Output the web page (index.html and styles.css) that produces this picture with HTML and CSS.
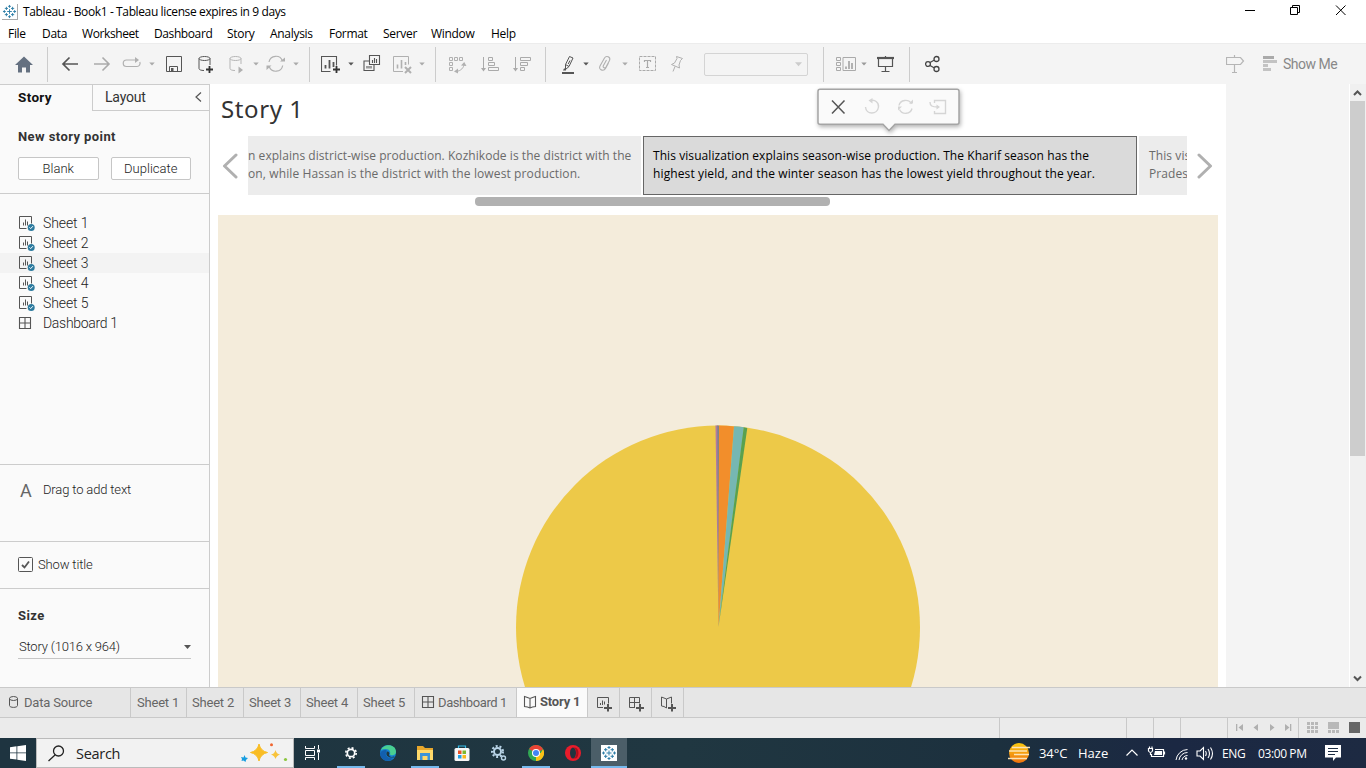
FILE: index.html
```html
<!DOCTYPE html>
<html lang="en">
<head>
<meta charset="utf-8">
<title>Tableau - Book1</title>
<link rel="stylesheet" href="styles.css">
</head>
<body>
<svg class="defs" width="0" height="0">
  <defs>
    <symbol id="tableau" viewBox="0 0 16 16">
      <rect width="16" height="16" fill="#fff"/>
      <g fill="none" stroke="#2f7fa8" stroke-width="1">
        <path d="M8 5.500v5M5.500 8h5M8 1v3M6.500 2.500h3M8 12v3M6.500 13.500h3M1 8h3M2.500 6.500v3M12 8h3M13.500 6.500v3M4.700 3v3.400M3 4.700h3.400M11.300 3v3.400M9.600 4.700h3.400M4.700 9.600v3.400M3 11.300h3.400M11.300 9.600v3.400M9.600 11.300h3.400"/>
      </g>
    </symbol>
    <symbol id="sheet" viewBox="0 0 17 16">
      <path d="M8.500 13.500h-7v-12h12v7" fill="none" stroke="#555" stroke-width="1"/>
      <path d="M5.500 7.500v3M7.500 4.500v6M9.500 6.500v4" stroke="#555" fill="none"/>
      <circle cx="13.200" cy="12.400" r="3.500" fill="#2d7b9f"/>
      <path d="M11.500 12.400l1.200 1.200 2.200-2.400" stroke="#fff" fill="none"/>
    </symbol>
    <symbol id="grid" viewBox="0 0 14 14">
      <path d="M1.500 1.500h11v11h-11zM7 1.500v11M1.500 7h11" fill="none" stroke="#555" stroke-width="1.100"/>
    </symbol>
    <symbol id="book" viewBox="0 0 14 14">
      <path d="M1.500 1.500L4.500 2.500 7 3.500l2.500-1 3-1v10l-3 .500L7 13l-2.500-1-3-.500zM7 3.500V13" fill="none" stroke="#555" stroke-width="1.100"/>
    </symbol>
    <symbol id="caret" viewBox="0 0 6 4"><path d="M.300.500h5.400L3 3.500z" fill="currentColor"/></symbol>
  </defs>
</svg>
<div class="app">
  <header class="titlebar">
    <svg class="app-icon"><use href="#tableau"/></svg>
    <span class="title">Tableau - Book1 - Tableau license expires in 9 days</span>
    <svg class="win" viewBox="0 0 110 20" fill="none" stroke="#000"><path d="M3 10.500h10M48.500 7.500h7v7h-7zM50.500 7.500v-2h7v7h-2M94 5.500l9.500 9.500M103.500 5.500l-9.500 9.500"/></svg>
  </header>
  <nav class="menu">
    <span class="m-file">File</span><span class="m-data">Data</span><span class="m-ws">Worksheet</span><span class="m-db">Dashboard</span><span class="m-story">Story</span><span class="m-an">Analysis</span><span class="m-fmt">Format</span><span class="m-srv">Server</span><span class="m-win">Window</span><span class="m-help">Help</span>
  </nav>
  <div class="toolbar">
    <div class="group g-home">
      <svg class="t-home" viewBox="0 0 20 20"><path d="M1 11L10 2.500 19 11h-3v7.500h-4v-5H8v5H4V11z" fill="#647080"/></svg>
    </div>
    <div class="group g-file">
      <svg class="t-back" viewBox="0 0 18 20" fill="none" stroke="#555" stroke-width="1.700"><path d="M17 10H2M8.500 3.500L2 10l6.500 6.500"/></svg>
      <svg class="t-fwd" viewBox="0 0 18 20" fill="none" stroke="#aaa" stroke-width="1.600"><path d="M0 10h15M8.500 3.500L15 10l-6.500 6.500"/></svg>
      <svg class="t-redo" viewBox="0 0 20 20" fill="none" stroke="#b0b0b0" stroke-width="1.200"><path d="M8 6H4.500a3.200 3.200 0 0 0 0 6.500h10.500a3.200 3.200 0 0 0 2.800-4.500M8 6h6"/><path d="M13 3l4 3-4 3z" fill="#b0b0b0" stroke="none"/></svg>
      <svg class="c c-redo dim"><use href="#caret"/></svg>
      <svg class="t-save" viewBox="0 0 17 20" fill="none" stroke="#555"><path d="M.500 2.500h15v15H.500zM3.500 17.500v-5h8v5"/><path d="M5 14h2.500v3H5z" fill="#555" stroke="none"/></svg>
      <svg class="t-db" viewBox="0 0 16 20" fill="none" stroke="#555"><ellipse cx="6.500" cy="4.500" rx="5.500" ry="2"/><path d="M1 4.500v10c0 1.200 2 2 5 2M12 4.500V11"/><path d="M11.500 12v7M8 15.500h7" stroke="#333" stroke-width="1.800"/></svg>
      <svg class="t-play" viewBox="0 0 16 20" fill="none" stroke="#b5b5b5"><ellipse cx="6.500" cy="4.500" rx="5.500" ry="2"/><path d="M1 4.500v10c0 1.200 2 2 5 2M12 4.500V10"/><path d="M9.500 12.500l4.500 3.500-4.500 3.500z" fill="#b0b0b0" stroke="none"/></svg>
      <svg class="c c-play dim"><use href="#caret"/></svg>
      <svg class="t-refresh" viewBox="0 0 20 20" fill="none" stroke="#b0b0b0" stroke-width="1.200"><path d="M3 8a7 7 0 0 1 13.500-1M16.700 11.500a7 7 0 0 1-13.500 1"/><path d="M14 7.500h5V3.500zM.500 16v-4.500h5z" fill="#b0b0b0" stroke="none"/></svg>
      <svg class="c c-refresh dim"><use href="#caret"/></svg>
    </div>
    <div class="group g-sheet">
      <svg class="t-new" viewBox="0 0 20 20" fill="none" stroke="#555"><path d="M9.500 17.500h-9v-15h15v9" stroke-width="1.100"/><path d="M4.500 11v3.500M8.500 6v8.500M12.500 8v5" stroke-width="1.800"/><path d="M15.500 12v7M12 15.500h7" stroke="#333" stroke-width="1.800"/></svg>
      <svg class="c c-new"><use href="#caret"/></svg>
      <svg class="t-dup" viewBox="0 0 18 20" fill="none" stroke="#555" stroke-width="1.100"><path d="M6.500 1.500h10v9h-10zM6.500 7h-5.500v9.500h10v-6"/><path d="M9.500 6v3M11.500 4v5M13.500 5v4M4 12v2.500M6 12v2.500M8 12v2.500"/></svg>
      <svg class="t-clear" viewBox="0 0 20 20" fill="none" stroke="#b0b0b0"><path d="M10 17.500H.500v-15h15v8"/><path d="M4.500 10.500v4M8.500 6v8.500M12.500 8v3" stroke-width="1.600"/><path d="M12 13l6 6M18 13l-6 6" stroke-width="2"/></svg>
      <svg class="c c-clear dim"><use href="#caret"/></svg>
    </div>
    <div class="group g-sort">
      <svg class="t-swap" viewBox="0 0 18 20" fill="none" stroke="#b0b0b0"><path d="M.500 3.500h3v3h-3zM5.500 3.500h3v3h-3zM10.500 3.500h3v3h-3zM.500 8.500h3v3h-3zM.500 13.500h3v3h-3zM15 10c0 3.500-3 7-8 7.500"/><path d="M12 11.500l3.200-3.500 2.300 4zM9 14.500L5 17.500l4 2z" fill="#b0b0b0" stroke="none"/></svg>
      <svg class="t-asc" viewBox="0 0 19 20" fill="none" stroke="#aaa"><path d="M2.500 3v13.500M7.500 3.500h4v3h-4zM7.500 8.500h6v3h-6zM7.500 13.500h10v3h-10z"/><path d="M0 14h5l-2.500 3.500z" fill="#aaa" stroke="none"/></svg>
      <svg class="t-desc" viewBox="0 0 19 20" fill="none" stroke="#aaa"><path d="M2.500 3v13.500M7.500 3.500h10v3h-10zM7.500 8.500h7v3h-7zM7.500 13.500h4v3h-4z"/><path d="M0 14h5l-2.500 3.500z" fill="#aaa" stroke="none"/></svg>
    </div>
    <div class="group g-format">
      <svg class="t-pen" viewBox="0 0 14 20" fill="none" stroke="#555"><path d="M7.500 2.500l3.500 1.500-4 8.500-3.500 3v-5zM3.500 10.500l3.500 2M8 6.500L6.200 10"/><path d="M0 19h12" stroke-width="2"/><path d="M2 14.500h2v2H1z" fill="#555" stroke="none"/></svg>
      <svg class="c c-pen"><use href="#caret"/></svg>
      <svg class="t-clip" viewBox="0 0 14 20" fill="none" stroke="#b0b0b0" stroke-width="1.100"><path d="M10.500 9L7.500 14.500c-2 3.500-7.500 1-5.500-2.500L6.500 4c1.800-3 6.500-1 5 2.500L8 13c-1 1.700-3.500.500-2.700-1.200L8.500 6"/></svg>
      <svg class="c c-clip dim"><use href="#caret"/></svg>
      <svg class="t-text" viewBox="0 0 18 20" fill="none" stroke="#aaa"><rect x=".500" y="2.500" width="16" height="14" stroke-dasharray="3 1"/><path d="M5.500 8V6.500h6V8M8.500 6.500v7M7 13.500h3" stroke-width="1.200"/></svg>
      <svg class="t-pin" viewBox="0 0 14 20" fill="none" stroke="#b0b0b0"><path d="M6.500 2.500l6 2-2 2-1.500 4.500.500 3-8-3.500 3-1.500 2.500-4.500zM5 12.500l-2 5"/></svg>
      <div class="combo"><svg class="combo-c" viewBox="0 0 8 5"><path d="M0 0h8L4 4.500z" fill="#ccc"/></svg></div>
    </div>
    <div class="group g-view">
      <svg class="t-cards" viewBox="0 0 21 20" fill="none" stroke="#aaa"><path d="M.500 3.500h4v3h-4zM.500 8.500h4v3h-4zM.500 13.500h4v3h-4zM7 3.500h12.500v13H7z"/><path d="M10 12.500V15M13 7v8M16 9v6" stroke-width="1.800"/></svg>
      <svg class="c c-cards mid"><use href="#caret"/></svg>
      <svg class="t-pres" viewBox="0 0 18 20" fill="none" stroke="#555"><path d="M0 4h17" stroke-width="2.200"/><path d="M1.500 5v7.500h14V5M8.500 12.500v5M4.500 17.500h8M8.500 2v2" stroke-width="1.200"/></svg>
    </div>
    <div class="group g-share">
      <svg class="t-share" viewBox="0 0 16 20" fill="none" stroke="#444" stroke-width="1.300"><circle cx="3" cy="10" r="2.400"/><circle cx="11.500" cy="5" r="2.500"/><circle cx="11.500" cy="15" r="2.500"/><path d="M5 8.500l4-2.200M5 11.500l4 2.200"/></svg>
    </div>
    <svg class="t-sign" viewBox="0 0 19 20" fill="none" stroke="#b5b5b5" stroke-width="1.200"><path d="M.500 3.500h14l3 3.500-3 3.500H.500zM8.500 1v2.500M8.500 10.500v8M6 18.500h5"/></svg>
    <svg class="t-showme" viewBox="0 0 14 20" fill="#c3c3c3"><path d="M0 2h11v3H0z" fill="#aaa"/><path d="M0 6h14v3H0zM0 10h5v3H0zM0 14h8v3H0z"/></svg>
    <span class="showme">Show Me</span>
  </div>
  <main class="work">
    <aside class="side">
      <div class="side-tabs"><div class="on">Story</div><div class="off"><span>Layout</span><svg viewBox="0 0 7 10" fill="none" stroke="#555" stroke-width="1.200"><path d="M6 .500L1 5l5 4.500"/></svg></div></div>
      <section class="s-new">
        <h2>New story point</h2>
        <div class="btns"><button>Blank</button><button>Duplicate</button></div>
      </section>
      <section class="s-list">
        <div class="row"><svg class="sh"><use href="#sheet"/></svg><span>Sheet 1</span></div>
        <div class="row"><svg class="sh"><use href="#sheet"/></svg><span>Sheet 2</span></div>
        <div class="row hover"><svg class="sh"><use href="#sheet"/></svg><span>Sheet 3</span></div>
        <div class="row"><svg class="sh"><use href="#sheet"/></svg><span>Sheet 4</span></div>
        <div class="row"><svg class="sh"><use href="#sheet"/></svg><span>Sheet 5</span></div>
        <div class="row"><svg class="da"><use href="#grid"/></svg><span class="dash">Dashboard 1</span></div>
      </section>
      <section class="s-drag"><b class="big-a">A</b><span>Drag to add text</span></section>
      <section class="s-show"><svg viewBox="0 0 15 15" fill="none" stroke="#555"><rect x=".500" y=".500" width="14" height="14" rx="1"/><path d="M4 8l2.500 2.500L11 4.500" stroke-width="1.800"/></svg><span>Show title</span></section>
      <section class="s-size"><h2>Size</h2><div class="select"><span>Story (1016 x 964)</span><svg viewBox="0 0 7 4"><path d="M0 0h7L3.500 4z" fill="#555"/></svg></div></section>
    </aside>
    <div class="story">
      <h1>Story 1</h1>
      <div class="nav">
        <svg class="arrow" viewBox="0 0 16 26" fill="none" stroke="#b0b0b0" stroke-width="3" stroke-linecap="round" stroke-linejoin="round"><path d="M14 2L2.500 13 14 24"/></svg>
        <div class="points">
          <div class="pt left"><p class="l1">n explains district-wise production. Kozhikode is the district with the</p><p class="l2">on, while Hassan is the district with the lowest production.</p></div>
          <div class="pt cur"><p class="k1">This visualization explains season-wise production. The Kharif season has the</p><p class="k2">highest yield, and the winter season has the lowest yield throughout the year.</p></div>
          <div class="pt right"><p>This vis</p><p>Prades</p></div>
        </div>
        <svg class="arrow r" viewBox="0 0 16 26" fill="none" stroke="#b0b0b0" stroke-width="3" stroke-linecap="round" stroke-linejoin="round"><path d="M2 2l11.500 11L2 24"/></svg>
      </div>
      <div class="hbar"></div>
      <div class="viz">
        <svg viewBox="0 0 1000 472">
          <circle cx="500" cy="412.500" r="202" fill="#edc948"/>
          <path d="M500.500 412L497.500 210.500H500z" fill="#b07aa1"/>
          <path d="M500.500 412L499.300 210.500h1.800z" fill="#7f8289"/>
          <path d="M500.500 412L501 210.500q8 0 15 1z" fill="#f28e2b"/>
          <path d="M500.500 412L516 211.300q5 0 10 1z" fill="#76b7b2"/>
          <path d="M500.500 412L525.700 212.200l3.600.700z" fill="#59a14f"/>
        </svg>
      </div>
      <div class="popup">
        <svg viewBox="0 0 143 44" fill="none"><path d="M3 1.300h137q2 0 2 2v31q0 2-2 2H78L72 42.500 66 36.300H3q-2 0-2-2v-31q0-2 2-2z" fill="#fafafa" stroke="#a5a5a5" stroke-width="1.500"/><path d="M15 12.500l12.500 13M27.500 12.500L15 25.500" stroke="#555" stroke-width="1.500"/><g stroke="#d5d5d5" stroke-width="1.400"><path d="M54 12.500c4-1 8 2 7.500 6.500-1 8-12.500 8-13 0M82 17.500c1-6 10-7 12.500-1.500M95 20.500c-1.500 6-10 6.500-12.500 1M117.500 15v-2.500h11v13h-11V23M113 14c0 4 2 5 8 5"/><path d="M55.500 10v5.500L51.500 12.500zM92 15.500h4v-4zM81 22.500v-4h4zM119.500 16.500v5l3.500-2.500z" fill="#d5d5d5" stroke="none"/></g></svg>
      </div>
    </div>
    <div class="blank"></div>
    <div class="vbar"><svg viewBox="0 0 15 17" fill="none" stroke="#555" stroke-width="2"><path d="M4 11l3.500-3.500L11 11"/></svg><div class="thumb"></div><svg class="down" viewBox="0 0 15 17" fill="none" stroke="#555" stroke-width="2"><path d="M4 6.500L7.500 10 11 6.500"/></svg></div>
  </main>
  <div class="tabs">
    <div class="tab ds"><svg viewBox="0 0 9 12" fill="none" stroke="#555"><ellipse cx="4.500" cy="2.500" rx="4" ry="2"/><path d="M.500 2.500v7c0 2.500 8 2.500 8 0v-7"/></svg><span>Data Source</span></div>
    <div class="tab s1">Sheet 1</div><div class="tab">Sheet 2</div><div class="tab">Sheet 3</div><div class="tab">Sheet 4</div><div class="tab">Sheet 5</div>
    <div class="tab db"><svg><use href="#grid"/></svg><span>Dashboard 1</span></div>
    <div class="tab st"><svg><use href="#book"/></svg><span>Story 1</span></div>
    <div class="tab add"><svg viewBox="0 0 18 18" fill="none" stroke="#555"><path d="M8 12.500H2.500v-10h11v6M5.500 8v2M7.500 5.500v4.500M9.500 6.500v3"/><path d="M13 9v7.500M9 13h8" stroke-width="2"/></svg></div>
    <div class="tab add"><svg viewBox="0 0 18 18" fill="none" stroke="#555"><path d="M8 12.500H2.500v-10h10v6M7.500 2.500v10M2.500 7.500h10"/><path d="M13 9v7.500M9 13h8" stroke-width="2"/></svg></div>
    <div class="tab add"><svg viewBox="0 0 18 18" fill="none" stroke="#555"><path d="M7.500 13L5 11.500 2.500 11V2L5 3l2.500 1L10 3l2.500-1v6.500M7.500 4v9"/><path d="M13 9v7.500M9 13h8" stroke-width="2"/></svg></div>
  </div>
  <div class="status">
    <i class="w1"></i><i class="w2"></i><i class="w3"></i><i class="w3"></i><i class="w4"></i>
    <div class="pager"><svg viewBox="0 0 56 8" fill="#b0b0b0"><path d="M0 0h1.300v7H0zM7 0v7L2.500 3.500zM22 0v7L17.500 3.500zM34 0v7l4.500-3.500zM49 0v7l4.500-3.500zM54 0h1.300v7H54z"/></svg></div>
    <svg class="modes" viewBox="0 0 54 11" fill="#b8b8b8"><path d="M0 0h3v3H0zM4 0h3v3H4zM8 0h3v3H8zM0 4h3v3H0zM4 4h3v3H4zM8 4h3v3H8zM0 8h3v3H0zM4 8h3v3H4zM8 8h3v3H8zM21 0h11v7H21zM21 8h3v3h-3zM25 8h3v3h-3zM29 8h3v3h-3z"/><path d="M42 0h11v11H42z" fill="#666"/></svg>
  </div>
  <footer class="taskbar">
    <div class="start"><svg viewBox="0 0 16 16" fill="#fff"><path d="M0 2.200l6.500-.900v6.200H0zM7.300 1.200L16 0v7.500H7.300zM0 8.300h6.500v6.200L0 13.700zM7.300 8.300H16V16l-8.700-1.200z"/></svg></div>
    <div class="search"><svg class="mag" viewBox="0 0 17 17" fill="none" stroke="#222" stroke-width="1.300"><circle cx="10.500" cy="6" r="5"/><path d="M7 10l-6.500 6"/></svg><span>Search</span><svg class="stars" viewBox="0 0 48 20"><path d="M18 1q1.500 7 8.500 8.500-7 1.500-8.500 8.500-1.500-7-8.500-8.500 7-1.500 8.500-8.500z" fill="#f9bd24" stroke="#f9bd24"/><path d="M34.500 7q1 4 4.500 4.500-3.500 1-4.500 4.500-1-3.500-4.500-4.500 3.500-.500 4.500-4.500z" fill="#f8c33a"/><path d="M3.500 12l1 2.500 2.500.500-2 2-.500 2-2-1.500L.500 18l.500-2-1-2 2.500.500z" fill="#169de0"/><circle cx="30.500" cy="1.800" r="1.500" fill="#f0652f"/><circle cx="44.500" cy="16.500" r="1.600" fill="#8cc63f"/></svg></div>
    <div class="task tv"><svg viewBox="0 0 18 16" fill="none" stroke="#fff"><path d="M1.500 1V3.500h9V1M1.500 5.500h9v5h-9zM1.500 15v-2.500h9V15M14.500 0v4M14.500 8v7"/><path d="M13 4.500h3v3h-3z" fill="#fff" stroke="none"/></svg></div>
    <div class="task run gear"><svg viewBox="0 0 16 16" fill="none" stroke="#fff"><circle cx="8" cy="8" r="3.700" stroke-width="1.700"/><circle cx="8" cy="8" r="5.200" stroke-width="1.600" stroke-dasharray="2.040 2.040"/></svg></div>
    <div class="task"><svg viewBox="0 0 16 16"><circle cx="8" cy="8" r="8" fill="#1683d0"/><path d="M1 5C3-1.500 16-2 16 7c0 4-6 4-6 2 1.500-5-5-6-9-4z" fill="#49cf91"/><path d="M0 8c2-4 7-3.500 7-2-3 3-.500 7.500 6 7.500-5 5-13 1.500-13-5.500z" fill="#125fae"/><path d="M7 6.500c-2 4 1 6.500 7 6 .500-1 .500-1 0-1-3 1-5 0-5-2 1-1 .500-3-2-3z" fill="#203742"/></svg></div>
    <div class="task run"><svg viewBox="0 0 16 16"><path d="M0 1h6l2 2h8v12H0z" fill="#e8a72c"/><path d="M0 5h16v10H0z" fill="#ffd96a"/><path d="M3 15V8h10v7h-2.500v-4h-5v4z" fill="#3b94d9"/></svg></div>
    <div class="task"><svg viewBox="0 0 16 16"><path d="M4.500 4V1h7v3" fill="none" stroke="#37bce8" stroke-width="1.200"/><rect x=".500" y="3" width="15" height="13" rx="1.500" fill="#f7f7f7"/><path d="M4 5.500h3.500V9H4z" fill="#e95125"/><path d="M8.500 5.500H12V9H8.500z" fill="#7db82f"/><path d="M4 10h3.500v3.500H4z" fill="#219fe3"/><path d="M8.500 10H12v3.500H8.500z" fill="#f9b71d"/></svg></div>
    <div class="task"><svg viewBox="0 0 16 16" fill="none" stroke="#b9d4e7"><circle cx="6.500" cy="6.500" r="3.500" stroke-width="2"/><circle cx="6.500" cy="6.500" r="5.500" stroke-width="2" stroke-dasharray="2 1.900"/><circle cx="12.500" cy="13" r="2" stroke-width="1.400"/></svg></div>
    <div class="task run"><svg viewBox="0 0 16 16"><circle cx="8" cy="8" r="8" fill="#31a853"/><path d="M8 8L1.100 4A8 8 0 0 1 15 4z" fill="#ea4335"/><path d="M8 8h8a8 8 0 0 1-8 8l4-6.500L15 4A8 8 0 0 1 8 16z" fill="#fbc116"/><path d="M8 4h7l-3 2z" fill="#ea4335"/><circle cx="8" cy="8" r="4" fill="#fff"/><circle cx="8" cy="8" r="3" fill="#4285f4"/></svg></div>
    <div class="task"><svg viewBox="0 0 16 16"><circle cx="8" cy="8" r="8" fill="#e91c2b"/><ellipse cx="8" cy="8" rx="3" ry="5.500" fill="#20343f"/><path d="M9 2.500c6-1 6 12 0 11 3-2 3-9 0-11z" fill="#a90d1b"/></svg></div>
    <div class="task run active"><svg><use href="#tableau"/></svg></div>
    <div class="tray">
      <svg class="haze" viewBox="0 0 24 20"><defs><linearGradient id="sun" x1="0" y1="0" x2="0" y2="1"><stop stop-color="#fbc90e"/><stop offset="1" stop-color="#ee710f"/></linearGradient></defs><circle cx="12" cy="10" r="10" fill="url(#sun)"/><path d="M5 4.500h18M2 8h18M7 11.500h15M1 15.500h19" stroke="#fde3b4" stroke-width="1.600"/></svg>
      <span class="deg">34°C</span><span class="hz">Haze</span>
      <svg class="icons" viewBox="0 0 90 20" fill="none" stroke="#fff" stroke-width="1.200"><path d="M1.500 12.500L7 7l5.500 5.500"/><path d="M30 6.500h8.500v7h-12v-2.500M39.500 8.500v3"/><path d="M30 8h7v4h-8z" fill="#fff" stroke="none"/><path d="M23.500 5.500h4v2.500q-2 3-4 0zM24.500 3.500v2M27 3.500v2M25.500 9.500v2.500"/><path d="M51 17A12 12 0 0 1 62.500 6.500M54 17a8.500 8.500 0 0 1 8.500-7.500M57 17a6 6 0 0 1 5.500-4.500" stroke-width="1"/><circle cx="61" cy="15.500" r="1.200" fill="#fff" stroke="none"/><path d="M72 8h3l3.500-3.500v12L75 13h-3zM80.500 8q1.500 2.500 0 5M83 6q3 4.500 0 9M85.500 4.500q4 6 0 12" stroke-width="1.100"/></svg>
      <span class="eng">ENG</span><span class="clock">03:00 PM</span>
      <svg class="note" viewBox="0 0 16 16"><path d="M0 0h16v12.500H11L8 16v-3.500H0z" fill="#fff"/><path d="M3 3.500h10M3 6.500h10M3 9.500h7" stroke="#1c2c42"/></svg>
    </div>
  </footer>
</div>
</body>
</html>
```
FILE: styles.css
```css
* { box-sizing: border-box; }
body { margin: 0; background: #fff; color: #444; font-family: Roboto, sans-serif; }
h1, h2, p { margin: 0; font-weight: 400; }
svg { display: block; flex: none; }
span { white-space: nowrap; }
.defs { position: absolute; }
.app { width: 1366px; height: 768px; display: flex; flex-direction: column; overflow: hidden; }

.titlebar { height: 24px; display: flex; align-items: center; font: 12px/24px "Open Sans", sans-serif; color: #000; }
.app-icon { width: 16px; height: 16px; margin-left: 2px; border-right: 1px solid #aaa; border-bottom: 1px solid #aaa; }
.title { margin-left: 5px; letter-spacing: -.38px; }
.win { width: 110px; height: 20px; margin: -4px 14px 0 auto; }
.menu { height: 19px; display: flex; font: 12px/20px "Open Sans", sans-serif; color: #000; letter-spacing: -.3px; }
.m-file { margin-left: 8px; width: 34px; } .m-data { width: 40px; } .m-ws { width: 72px; letter-spacing: -.4px; } .m-db { width: 73px; letter-spacing: -.4px; }
.m-story { width: 43px; } .m-an { width: 59px; } .m-fmt { width: 54px; } .m-srv { width: 48px; } .m-win { width: 60px; }

.toolbar { height: 41px; background: #f4f4f4; border-top: 1px solid #ececec; display: flex; align-items: center; color: #555; }
.toolbar > svg, .group > svg { height: 20px; }
.group { height: 35px; display: flex; align-items: center; border-right: 1px solid #ccc; }
.group .c { width: 6px; height: 4px; }
.group .dim { color: #aaa; } .group .mid { color: #999; }
.g-home { width: 48px; } .t-home { width: 20px; margin-left: 14px; }
.g-file { width: 262px; }
.t-back { width: 18px; margin-left: 13px; } .t-fwd { width: 18px; margin-left: 15px; }
.t-redo { width: 20px; margin-left: 10px; } .c-redo { margin-left: 7px; }
.t-save { width: 17px; margin-left: 11px; } .t-db { width: 16px; margin-left: 15px; }
.t-play { width: 16px; margin-left: 15px; } .c-play { margin-left: 8px; }
.t-refresh { width: 20px; margin-left: 7px; } .c-refresh { margin-left: 7px; }
.g-sheet { width: 126px; } .t-new { width: 20px; margin-left: 11px; } .c-new { margin-left: 7px; }
.t-dup { width: 18px; margin-left: 9px; } .t-clear { width: 20px; margin-left: 12px; } .c-clear { margin-left: 6px; }
.g-sort { width: 110px; } .t-swap { width: 18px; margin-left: 13px; } .t-asc { width: 19px; margin-left: 14px; } .t-desc { width: 19px; margin-left: 13px; }
.g-format { width: 278px; } .t-pen { width: 14px; margin-left: 16px; } .c-pen { margin-left: 7px; }
.t-clip { width: 14px; margin-left: 9px; } .c-clip { margin-left: 10px; } .t-text { width: 18px; margin-left: 11px; }
.t-pin { width: 14px; margin-left: 13px; }
.combo { width: 104px; height: 23px; margin-left: 20px; border: 1px solid #d4d4d4; border-radius: 2px; display: flex; align-items: center; justify-content: flex-end; padding-right: 5px; }
.combo-c { width: 7px; height: 5px; }
.g-view { width: 86px; } .t-cards { width: 21px; margin-left: 12px; } .c-cards { margin-left: 4px; } .t-pres { width: 18px; margin-left: 10px; }
.g-share { width: 32px; border: 0; } .t-share { width: 16px; margin-left: 15px; }
.t-sign { width: 19px; margin-left: auto; } .t-showme { width: 14px; margin-left: 18px; }
.showme { margin: 0 29px 0 6px; width: 54px; font-size: 14px; color: #888; letter-spacing: -.5px; }

.work { height: 603px; display: flex; }
.side { width: 210px; background: #fafafa; border-right: 1px solid #ccc; color: #333; }
.side-tabs { display: flex; height: 27px; border-top: 1px solid #ccc; font-size: 14px; line-height: 25px; }
.on { width: 92px; padding-left: 18px; font-weight: 700; font-size: 13.500px; color: #111; letter-spacing: .35px; }
.off { flex: 1; display: flex; align-items: center; justify-content: space-between; border: solid #ccc; border-width: 0 0 1px 1px; padding: 0 7px 0 12px; letter-spacing: -.2px; }
.off svg { width: 7px; height: 10px; margin-top: -2px; }
.side h2 { font-size: 13px; font-weight: 700; letter-spacing: .42px; }
.s-new { height: 83px; border-bottom: 1px solid #ccc; padding: 17px 18px 0; }
.s-new h2 { line-height: 17px; }
.btns { display: flex; gap: 12px; margin-top: 12px; }
button { flex: 1; height: 23px; padding: 0; background: #fff; border: 1px solid #c6c6c6; border-radius: 2px; font: 300 13px/20px Roboto, sans-serif; color: #222; }
.s-list { height: 271px; border-bottom: 1px solid #ccc; padding-top: 19px; font-size: 14px; font-weight: 300; color: #222; }
.row { height: 20px; line-height: 20px; display: flex; align-items: center; padding-left: 18px; letter-spacing: -.1px; }
.dash { letter-spacing: -.3px; }
.hover { background: #f3f3f3; }
.sh { width: 17px; height: 16px; margin: 0 8px 1px 0; }
.da { width: 14px; height: 14px; margin: -1px 11px 0 0; }
.s-drag { height: 77px; border-bottom: 1px solid #ccc; display: flex; padding: 15px 0 0 20px; font: 300 13px/20px Roboto, sans-serif; color: #222; letter-spacing: -.15px; }
.big-a { width: 23px; font: 18px/21px Roboto, sans-serif; color: #666; }
.s-show { height: 47px; border-bottom: 1px solid #ccc; display: flex; align-items: center; gap: 5px; padding-left: 18px; font: 300 13px/20px Roboto, sans-serif; color: #222; letter-spacing: -.15px; }
.s-show svg { width: 15px; height: 15px; margin-top: -1px; }
.s-size { padding: 18px 18px 0; }
.s-size h2 { line-height: 18px; }
.select { height: 24px; margin-top: 10px; border-bottom: 1px solid #c6c6c6; display: flex; align-items: center; justify-content: space-between; padding-left: 1px; font: 300 13px/20px Roboto, sans-serif; color: #222; letter-spacing: -.2px; }
.select svg { width: 7px; height: 4px; }

.story { width: 1016px; position: relative; padding: 0 8px; }
.story h1 { height: 52px; padding-left: 3px; font: 24px/50px "Noto Sans", sans-serif; color: #333; letter-spacing: .6px; }
.nav { height: 59px; display: flex; align-items: center; }
.arrow { width: 16px; height: 26px; margin: 0 10px 0 4px; }
.arrow.r { margin: 0 0 0 10px; }
.points { width: 939px; height: 59px; display: flex; gap: 2px; overflow: hidden; font: 300 12px/18px "Open Sans", sans-serif; }
.pt { flex: none; height: 59px; background: #ececec; color: #6a6a6a; padding: 11px 10px; white-space: nowrap; letter-spacing: .1px; }
.left { width: 393px; padding-left: 0; overflow: hidden; }
.cur { width: 494px; background: #dadada; border: 1px solid #666; color: #000; padding: 10px 9px; }
.right { width: 494px; }
.l1 { letter-spacing: .055px; } .l2 { letter-spacing: .12px; }
.k1 { letter-spacing: .07px; } .k2 { letter-spacing: .12px; }
.hbar { width: 355px; height: 9px; margin: 2px 0 9px 257px; border-radius: 4px; background: #b1b1b1; }
.viz { width: 1000px; height: 472px; background: #f4ecdb; overflow: hidden; }
.viz svg { width: 1000px; height: 472px; }
.popup { position: absolute; left: 607px; top: 4px; width: 143px; height: 44px; filter: drop-shadow(1px 2px 2px rgba(0,0,0,.3)); }
.blank { width: 124px; background: #f4f4f4; border-right: 1px solid #fff; }
.vbar { width: 16px; background: #f0f0f0; display: flex; flex-direction: column; }
.vbar svg { width: 15px; height: 17px; }
.thumb { width: 15px; height: 355px; background: #cdcdcd; }
.vbar .down { margin-top: auto; }

.tabs { height: 31px; background: #e6e6e6; border: solid #c9c9c9; border-width: 1px 0; display: flex; font-size: 13px; line-height: 29px; color: #666; letter-spacing: -.2px; }
.tab { width: 57px; border-right: 1px solid #c9c9c9; padding-left: 5px; display: flex; align-items: center; white-space: nowrap; }
.ds { width: 131px; padding-left: 9px; } .ds svg { width: 9px; height: 12px; margin: -2px 6px 0 0; }
.s1 { width: 56px; padding-left: 6px; }
.db { width: 102px; padding-left: 6px; letter-spacing: -.4px; } .db svg { width: 14px; height: 14px; margin: -2px 3px 0 0; }
.st { width: 71px; padding-left: 6px; background: #fafafa; font-weight: 700; color: #555; line-height: 27px; padding-bottom: 2px; } .st svg { width: 14px; height: 14px; margin-right: 3px; }
.add { width: 32px; padding-left: 7px; } .add svg { width: 18px; height: 18px; margin-top: 2px; }
.status { height: 20px; background: #ebebeb; display: flex; }
.status i { border-right: 1px solid #c9c9c9; }
.w1 { width: 1000px; } .w2 { width: 127px; } .w3 { width: 27px; } .w4 { width: 47px; }
.pager { width: 71px; border-right: 1px solid #c9c9c9; padding: 6px 0 0 8px; }
.pager svg { width: 56px; height: 8px; }
.modes { width: 54px; height: 11px; margin: 4px 0 0 8px; }

.taskbar { height: 30px; display: flex; background: linear-gradient(90deg, #1e3440 0, #203741 50%, #1c303e 73%, #1b2843 86%, #1d2a42); color: #fff; font-family: "Open Sans", sans-serif; }
.start { width: 36px; padding: 7px 0 0 10px; } .start svg { width: 16px; height: 16px; }
.search { width: 258px; background: #f2f2f2; border: 1px solid #bbb; display: flex; align-items: center; color: #222; font-size: 14.500px; }
.search span { width: 165px; margin-left: 11px; letter-spacing: -.3px; }
.mag { width: 17px; height: 17px; margin-left: 11px; }
.stars { width: 48px; height: 20px; }
.task { width: 37px; display: flex; align-items: center; justify-content: center; }
.task svg { width: 16px; height: 16px; }
.tv { width: 38px; } .task.tv svg { width: 18px; }
.run { border-bottom: 2px solid #76b9ed; padding-top: 2px; width: 28px; margin: 0 4px 0 5px; }
.active { width: 36px; margin: 0; background: #4b5e68; }
.tray { margin-left: auto; display: flex; align-items: center; font-size: 13px; }
.haze { width: 24px; height: 20px; }
.deg { width: 39px; margin-left: 8px; letter-spacing: -.1px; } .hz { width: 49px; }
.icons { width: 90px; height: 20px; }
.eng { width: 36px; margin-left: 6px; font-size: 12px; letter-spacing: -.3px; }
.clock { width: 67px; font-size: 12px; letter-spacing: -.4px; }
.note { width: 16px; height: 16px; margin-right: 25px; }
.tray .icons { margin: 0 1px 0 -2px; }
```
